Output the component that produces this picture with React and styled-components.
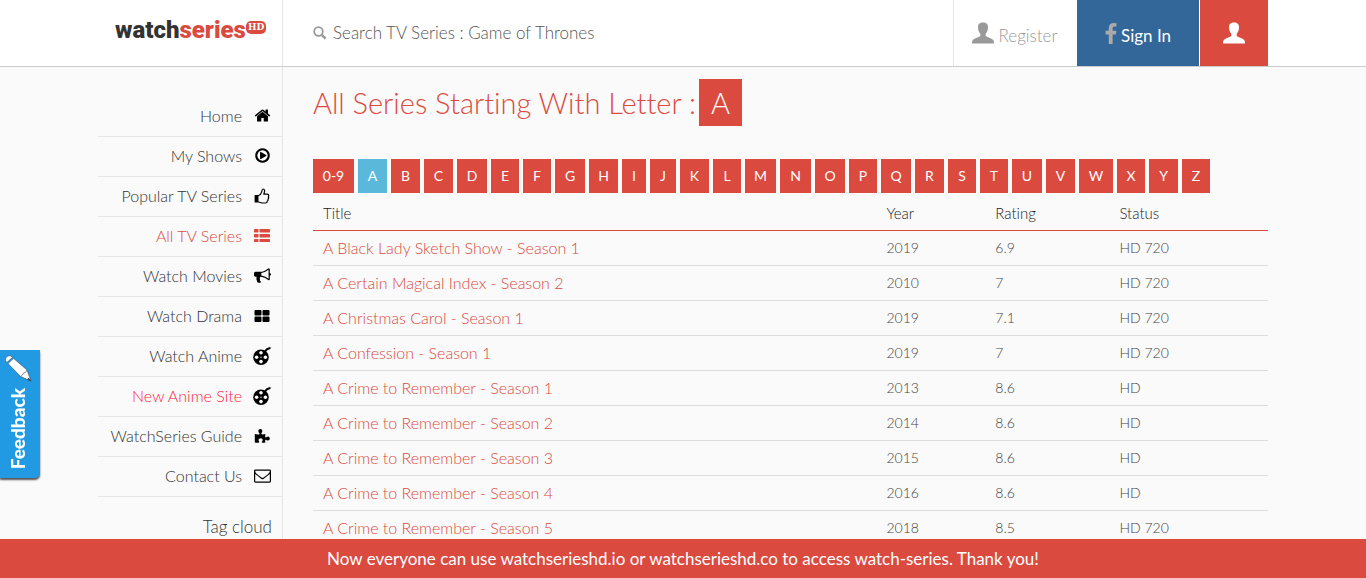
import React from "react";
import styled, { createGlobalStyle } from "styled-components";

const red = "#db4a3f";
const line = "#e5e5e5";

const GlobalStyle = createGlobalStyle`
  *, *::before, *::after { box-sizing: border-box; }
  body {
    margin: 0;
    background: #fafafa;
    color: #444;
    font-family: Lato, "Open Sans", sans-serif;
    font-size: 16px;
    font-weight: 300;
    font-variant-ligatures: none;
  }
  a { color: inherit; text-decoration: none; }
`;

const Page = styled.div`
  display: flex;
  flex-direction: column;
  min-height: 100vh;
`;

const Header = styled.header`
  background: #fff;
  border-bottom: 1px solid #ccc;
`;

const Container = styled.div`
  display: flex;
  flex: 1;
  width: 100%;
  max-width: 1170px;
  margin: 0 auto;
`;

const HeaderRow = styled(Container)`
  height: 66px;
`;

const LogoCell = styled.div`
  flex: 0 0 185px;
  padding: 12px 0 0 17px;
  border-right: 1px solid ${line};
`;

const Logo = styled.a`
  display: flex;
  align-items: flex-start;
  color: #333;
  font: 900 24px/36px Roboto, sans-serif;
`;

const LogoAccent = styled.span`
  color: ${red};
`;

const LogoBadge = styled.span`
  margin-top: 9px;
  padding: 0 2px;
  border-radius: 5px;
  background: ${red};
  color: #fff;
  font: bold 9px/13px "DejaVu Serif", serif;
`;

const SearchForm = styled.form`
  flex: 1;
  display: flex;
  align-items: center;
  gap: 6px;
  padding-left: 30px;
  color: #999;
`;

const SearchInput = styled.input`
  flex: 1;
  min-width: 0;
  padding: 0;
  border: 0;
  outline: 0;
  background: none;
  color: #555;
  font: 300 17px/24px Lato, sans-serif;
  &::placeholder { color: #555; opacity: 1; }
`;

const Account = styled.nav`
  display: flex;
  gap: 1px;
  border-left: 1px solid ${line};
`;

const AccountLink = styled.a`
  display: flex;
  align-items: center;
  justify-content: center;
  gap: 4px;
  width: ${(p) => p.$width}px;
  background: ${(p) => p.$bg};
  color: ${(p) => p.$color};
  font-size: 17px;
  font-weight: ${(p) => p.$weight || 300};
`;

const AccountText = styled.span`
  padding-top: 4px;
`;

const Sidebar = styled.aside`
  flex: 0 0 185px;
  padding-top: 30px;
  border-right: 1px solid ${line};
`;

const Menu = styled.ul`
  margin: 0;
  padding: 0;
  list-style: none;
`;

const MenuLink = styled.a`
  display: flex;
  align-items: center;
  justify-content: flex-end;
  gap: 11px;
  height: 40px;
  padding: 0 11px 2px 0;
  border-bottom: 1px solid ${line};
  color: ${(p) => p.$color || "#333"};
`;

const MenuIcon = styled.span`
  display: flex;
  justify-content: center;
  width: 18px;
  color: ${(p) => p.$color || "#000"};
`;

const TagTitle = styled.h2`
  margin: 18px 10px 0 0;
  color: #333;
  font-size: 17px;
  line-height: 24px;
  font-weight: 300;
  text-align: right;
`;

const Main = styled.main`
  flex: 1;
  min-width: 0;
  padding: 12px 0 30px 30px;
`;

const Title = styled.h1`
  display: flex;
  align-items: center;
  gap: 3px;
  margin: 0;
  color: ${red};
  font-size: 29px;
  line-height: 47px;
  font-weight: 300;
`;

const TitleLetter = styled.span`
  width: 43px;
  background: ${red};
  color: #fff;
  text-align: center;
`;

const Letters = styled.nav`
  display: flex;
  flex-wrap: wrap;
  gap: 4px;
  margin: 33px 0 3px;
`;

const LetterLink = styled.a`
  width: ${(p) => p.$width}px;
  background: ${(p) => (p.$active ? "#5ab8db" : red)};
  color: #fff;
  font-size: 14px;
  line-height: 34px;
  font-weight: 400;
  text-align: center;
`;

const Table = styled.table`
  width: 100%;
  border-collapse: separate;
  border-spacing: 0;
  table-layout: fixed;
  font-size: 14px;
  line-height: 20px;
`;

const HeadCell = styled.th`
  width: ${(p) => p.$width};
  height: 35px;
  padding: 0 10px;
  border-bottom: 1px solid ${red};
  color: #222;
  font-size: 15px;
  font-weight: 300;
  text-align: left;
`;

const Cell = styled.td`
  height: 35px;
  padding: 0 10px;
  border-bottom: 1px solid #ddd;
`;

const SeriesLink = styled.a`
  color: ${red};
  font-size: 16px;
`;

const Feedback = styled.button`
  position: fixed;
  left: 0;
  top: 350px;
  display: flex;
  flex-direction: column;
  align-items: center;
  gap: 6px;
  width: 40px;
  height: 128px;
  padding: 4px 4px 0 0;
  border: 0;
  border-radius: 0 0 5px 0;
  background: #2199e3;
  box-shadow: 0 2px 2px #555;
  color: #fff;
  font: 900 19px/24px Lato, sans-serif;
`;

const FeedbackText = styled.span`
  writing-mode: vertical-rl;
  transform: rotate(180deg);
`;

const Notice = styled.p`
  position: fixed;
  left: 0;
  right: 0;
  bottom: 0;
  margin: 0;
  background: ${red};
  color: #fff;
  font-size: 17px;
  line-height: 39px;
  font-weight: 400;
  text-align: center;
`;

function Fa({ d, size = 17 }) {
  return (
    <svg width={size} height={size} viewBox="0 0 1792 1792" fill="currentColor" aria-hidden="true">
      <path d={d} />
    </svg>
  );
}

const facebook =
  "M1343 12v264h-157q-86 0-116 36t-30 108v189h293l-39 296h-254v759h-306v-759h-255v-296h255v-218q0-186 104-288.5t277-102.5q147 0 228 12z";

const HomeIcon = () => (
  <Fa d="M1472 992v480q0 26-19 45t-45 19h-384v-384h-256v384h-384q-26 0-45-19t-19-45v-480q0-1 .5-3t.5-3l575-474 575 474q1 2 1 6zm223-69l-62 74q-8 9-21 11h-3q-13 0-21-7l-692-577-692 577q-12 8-24 7-13-2-21-11l-62-74q-8-10-7-23.500t11-21.500l719-599q32-26 76-26t76 26l244 204v-195q0-14 9-23t23-9h192q14 0 23 9t9 23v408l219 182q10 8 11 21.500t-7 23.500z" />
);

const PlayIcon = () => (
  <Fa d="M1312 896q0 37-32 55l-544 320q-15 9-32 9-16 0-32-8-32-19-32-56v-640q0-37 32-56 33-18 64 1l544 320q32 18 32 55zm128 0q0-148-73-273t-198-198-273-73-273 73-198 198-73 273 73 273 198 198 273 73 273-73 198-198 73-273zm224 0q0 209-103 385.500t-279.500 279.500-385.500 103-385.500-103-279.500-279.500-103-385.500 103-385.500 279.500-279.500 385.500-103 385.500 103 279.500 279.500 103 385.500z" />
);

const HornIcon = () => (
  <Fa d="M1664 640q53 0 90.500 37.500t37.500 90.500-37.500 90.500-90.500 37.500v384q0 52-38 90t-90 38q-417-347-812-380-58 19-91 66t-31 100.500 40 92.500q-20 33-23 65.500t6 58 33.500 55 48 50 61.500 50.500q-29 58-111.500 83t-168.500 11.500-132-55.500q-7-23-29.500-87.500t-32-94.500-23-89-15-101 3.500-98.500 22-110.500h-122q-66 0-113-47t-47-113v-192q0-66 47-113t113-47h480q435 0 896-384 52 0 90 38t38 90v384zm-128 604v-954q-394 302-768 343v270q377 42 768 341z" />
);

const MailIcon = () => (
  <Fa d="M1664 1504v-768q-32 36-69 66-268 206-426 338-51 43-83 67t-86.500 48.500-102.500 24.500h-2q-48 0-102.500-24.500t-86.500-48.500-83-67q-158-132-426-338-37-30-69-66v768q0 13 9.500 22.500t22.500 9.500h1472q13 0 22.500-9.500t9.500-22.500zm0-1051v-24.500l-.5-13-3-12.500-5.500-9-9-7.500-14-2.500h-1472q-13 0-22.500 9.500t-9.500 22.500q0 168 147 284 193 152 401 317 6 5 35 29.500t46 37.500 44.500 31.500 50.500 27.500 43 9h2q20 0 43-9t50.500-27.500 44.500-31.500 46-37.500 35-29.500q208-165 401-317 54-43 100.500-115.500t46.500-131.500zm128-37v1088q0 66-47 113t-113 47h-1472q-66 0-113-47t-47-113v-1088q0-66 47-113t113-47h1472q66 0 113 47t47 113z" />
);

const ThumbIcon = () => (
  <svg width="16" height="16" viewBox="0 0 16 16" aria-hidden="true">
    <path d="M1 7.500h3.500v6.500H1z" fill="currentColor" />
    <path
      d="M4.500 7.500 C6 7 7.500 4.800 7.800 3.600 C8 2.400 8 1 9 1 C10.800 1 10.800 3 10.300 4.500 L9.800 6.200 H13.500 C15 6.200 15 8.300 14.300 8.900 C15 9.800 14.600 10.800 14 11.200 C14.300 12.200 13.800 12.900 13.200 13.200 C13.200 14.500 12.500 15 11.500 15 H9 C7 15 6 14 4.500 14 H1.200 V7.500 Z"
      fill="none"
      stroke="currentColor"
      strokeWidth="1.200"
      strokeLinejoin="round"
    />
  </svg>
);

const ListIcon = () => (
  <svg width="16" height="13" viewBox="0 0 16 13" fill="currentColor" aria-hidden="true">
    {[0, 5, 10].map((y) => (
      <g key={y}>
        <rect x="0" y={y} width="4.500" height="3.400" rx=".6" />
        <rect x="5.500" y={y} width="10.500" height="3.400" rx=".6" />
      </g>
    ))}
  </svg>
);

const GridIcon = () => (
  <svg width="16" height="12" viewBox="0 0 16 12" fill="currentColor" aria-hidden="true">
    <rect x=".5" y="0" width="7" height="5.500" rx="1" />
    <rect x="8.500" y="0" width="7" height="5.500" rx="1" />
    <rect x=".5" y="6.500" width="7" height="5.500" rx="1" />
    <rect x="8.500" y="6.500" width="7" height="5.500" rx="1" />
  </svg>
);

const ReelIcon = () => (
  <svg width="18" height="18" viewBox="0 0 18 18" aria-hidden="true">
    <path d="M11.500 5 C13 2.600 15 1.200 17.500 1" fill="none" stroke="currentColor" strokeWidth="2" />
    <circle cx="8" cy="10.200" r="7.800" fill="currentColor" />
    <g fill="#fafafa">
      <circle cx="8" cy="5.800" r="1.800" />
      <circle cx="8" cy="14.600" r="1.800" />
      <circle cx="3.600" cy="10.200" r="1.800" />
      <circle cx="12.400" cy="10.200" r="1.800" />
      <circle cx="8" cy="10.200" r=".7" />
    </g>
  </svg>
);

const PuzzleIcon = () => (
  <svg width="16" height="16" viewBox="0 0 16 16" fill="currentColor" aria-hidden="true">
    <path d="M.8 6 C2.500 6.500 4.500 6.700 5.500 6.200 C6 5.500 4.300 4.500 4.300 3 C4.300 1.700 5.200 1 6.300 1 C7.500 1 8.300 1.800 8.300 3 C8.300 4.400 7 5.500 7.400 6.100 C8.500 6.700 10 6.200 11.400 6 C11.200 7.500 11 8.800 11.500 9.500 C12.300 9.700 12.800 8.500 14 8.500 C15.200 8.500 15.800 9.500 15.800 10.500 C15.800 11.700 15 12.500 14 12.500 C12.800 12.500 12 11.500 11.400 11.800 C11 12.500 11.200 13.500 11.400 14.500 C10 14.500 8.600 15 7.800 14.600 C7.300 14 8.700 13.200 8.700 12 C8.700 11 7.700 10.300 6.700 10.300 C5.500 10.300 4.600 11 4.600 12.100 C4.600 13.300 5.800 14.200 5 14.600 C4 15.200 2.200 14.600 .8 14.600 Z" />
  </svg>
);

const UserIcon = () => (
  <svg width="22" height="22" viewBox="0 0 22 22" fill="currentColor" aria-hidden="true">
    <path d="M11 .5 C14.200 .5 16.200 2.500 16 5.300 C15.900 7.800 15.500 10 13.700 11.800 V14 C15.500 15.300 19.500 16.200 21 17.700 C21.800 18.600 22 19.800 22 21.500 H0 C0 19.800 .2 18.600 1 17.700 C2.500 16.200 6.500 15.300 8.300 14 V11.800 C6.500 10 6.100 7.800 6 5.300 C5.800 2.500 7.800 .5 11 .5 Z" />
  </svg>
);

const SearchIcon = () => (
  <svg width="14" height="14" viewBox="0 0 14 14" fill="none" stroke="currentColor" aria-hidden="true">
    <circle cx="5.500" cy="5.500" r="4.300" strokeWidth="1.800" />
    <path d="M8.800 8.800 L12.600 12.600" strokeWidth="2.600" />
  </svg>
);

const FacebookIcon = () => (
  <svg width="12" height="21" viewBox="479 0 864 1664" fill="#aaa" aria-hidden="true">
    <path d={facebook} />
  </svg>
);

const PencilIcon = () => (
  <svg width="28" height="28" viewBox="0 0 28 28" fill="#fff" stroke="#345" strokeWidth=".6" aria-hidden="true">
    <path d="M1.500 6.500 C1 3.500 4 1.200 7 2 L8.500 3.300 L3 8.500 Z" />
    <path d="M4 9.500 L9.500 4.300 L23 16 L27 27 L16.500 22.500 Z" />
    <path d="M16.500 22.500 L18.500 21 L19.500 19 L21.500 18.500 L23 16" fill="none" />
    <path d="M24.500 24 L27 27 L23.500 25.500 Z" fill="#345" />
  </svg>
);

const menu = [
  { label: "Home", Icon: HomeIcon },
  { label: "My Shows", Icon: PlayIcon },
  { label: "Popular TV Series", Icon: ThumbIcon },
  { label: "All TV Series", Icon: ListIcon, color: red, iconColor: red },
  { label: "Watch Movies", Icon: HornIcon },
  { label: "Watch Drama", Icon: GridIcon },
  { label: "Watch Anime", Icon: ReelIcon },
  { label: "New Anime Site", Icon: ReelIcon, color: "#ff1a40" },
  { label: "WatchSeries Guide", Icon: PuzzleIcon },
  { label: "Contact Us", Icon: MailIcon },
];

const letters = [
  ["0-9", 41], ["A", 29], ["B", 29], ["C", 29], ["D", 30], ["E", 28], ["F", 28],
  ["G", 30], ["H", 29], ["I", 24], ["J", 26], ["K", 29], ["L", 28], ["M", 31],
  ["N", 31], ["O", 30], ["P", 28], ["Q", 30], ["R", 29], ["S", 28], ["T", 28],
  ["U", 30], ["V", 29], ["W", 34], ["X", 28], ["Y", 29], ["Z", 28],
];

const series = [
  ["A Black Lady Sketch Show - Season 1", "2019", "6.9", "HD 720"],
  ["A Certain Magical Index - Season 2", "2010", "7", "HD 720"],
  ["A Christmas Carol - Season 1", "2019", "7.1", "HD 720"],
  ["A Confession - Season 1", "2019", "7", "HD 720"],
  ["A Crime to Remember - Season 1", "2013", "8.6", "HD"],
  ["A Crime to Remember - Season 2", "2014", "8.6", "HD"],
  ["A Crime to Remember - Season 3", "2015", "8.6", "HD"],
  ["A Crime to Remember - Season 4", "2016", "8.6", "HD"],
  ["A Crime to Remember - Season 5", "2018", "8.5", "HD 720"],
];

export default function App() {
  return (
    <Page>
      <GlobalStyle />
      <Header>
        <HeaderRow>
          <LogoCell>
            <Logo href="#">
              <span>watch<LogoAccent>series</LogoAccent></span>
              <LogoBadge>HD</LogoBadge>
            </Logo>
          </LogoCell>
          <SearchForm role="search">
            <SearchIcon />
            <SearchInput type="text" aria-label="Search TV Series" placeholder="Search TV Series : Game of Thrones" />
          </SearchForm>
          <Account>
            <AccountLink href="#" $width={122} $bg="#fff" $color="#999">
              <UserIcon />
              <AccountText>Register</AccountText>
            </AccountLink>
            <AccountLink href="#" $width={122} $bg="#336699" $color="#fff" $weight={400}>
              <FacebookIcon />
              <AccountText>Sign In</AccountText>
            </AccountLink>
            <AccountLink href="#" aria-label="Account" $width={68} $bg={red} $color="#fff">
              <UserIcon />
            </AccountLink>
          </Account>
        </HeaderRow>
      </Header>
      <Container>
        <Sidebar>
          <Menu>
            {menu.map(({ label, Icon, color, iconColor }) => (
              <li key={label}>
                <MenuLink href="#" $color={color}>
                  {label}
                  <MenuIcon $color={iconColor}><Icon /></MenuIcon>
                </MenuLink>
              </li>
            ))}
          </Menu>
          <TagTitle>Tag cloud</TagTitle>
        </Sidebar>
        <Main>
          <Title>
            All Series Starting With Letter :<TitleLetter>A</TitleLetter>
          </Title>
          <Letters aria-label="Series by letter">
            {letters.map(([label, width]) => (
              <LetterLink key={label} href="#" $width={width} $active={label === "A"}>{label}</LetterLink>
            ))}
          </Letters>
          <Table>
            <thead>
              <tr>
                <HeadCell $width="59%">Title</HeadCell>
                <HeadCell $width="11.4%">Year</HeadCell>
                <HeadCell $width="13%">Rating</HeadCell>
                <HeadCell>Status</HeadCell>
              </tr>
            </thead>
            <tbody>
              {series.map(([title, year, rating, status]) => (
                <tr key={title}>
                  <Cell><SeriesLink href="#">{title}</SeriesLink></Cell>
                  <Cell>{year}</Cell>
                  <Cell>{rating}</Cell>
                  <Cell>{status}</Cell>
                </tr>
              ))}
            </tbody>
          </Table>
        </Main>
      </Container>
      <Feedback type="button">
        <PencilIcon />
        <FeedbackText>Feedback</FeedbackText>
      </Feedback>
      <Notice>
        Now everyone can use watchserieshd.io or watchserieshd.co to access watch-series. Thank you!
      </Notice>
    </Page>
  );
}
